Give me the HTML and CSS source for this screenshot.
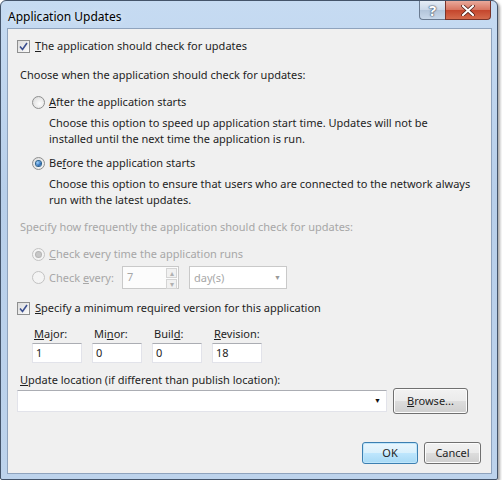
FILE: index.html
```html
<!DOCTYPE html>
<html lang="en">

<head>
    <meta charset="UTF-8" />
    <meta name="viewport" content="width=device-width, initial-scale=1.0" />
    <title>Application Updates</title>
    <link rel="stylesheet" href="styles.css">
</head>

<body>
    <div class="window">
        <div class="titlebar">
            <span class="title">Application Updates</span>
            <div class="caption-btns">
                <span class="cap-btn help">?</span>
                <span class="cap-btn close">
                    <svg width="14" height="11" viewBox="0 0 14 11">
                        <path d="M2 1 L12 10 M12 1 L2 10" stroke="#4a1a14" stroke-width="3.6" stroke-linecap="round" />
                        <path d="M2 1 L12 10 M12 1 L2 10" stroke="#fff" stroke-width="2.2" stroke-linecap="round" />
                    </svg>
                </span>
            </div>
        </div>

        <div class="client">
            <div class="check first">
                <span class="box"><svg width="9" height="9" viewBox="0 0 9 9"><path d="M1 4.5 L3.5 7.5 L8 1" fill="none" stroke="#3b4f8f" stroke-width="1.6" /></svg></span>
                <span><u>T</u>he application should check for updates</span>
            </div>

            <div class="label choose">Choose when the application should check for updates:</div>

            <div class="option after">
                <span class="radio"></span>
                <span><u>A</u>fter the application starts</span>
            </div>
            <div class="desc">Choose this option to speed up application start time. Updates will not be<br>installed until the next time the application is run.</div>

            <div class="option before">
                <span class="radio on"><span class="dot"></span></span>
                <span>Be<u>f</u>ore the application starts</span>
            </div>
            <div class="desc">Choose this option to ensure that users who are connected to the network always<br>run with the latest updates.</div>

            <div class="label disabled how">Specify how frequently the application should check for updates:</div>

            <div class="option disabled every-time">
                <span class="radio on"><span class="dot"></span></span>
                <span><u>C</u>heck every time the application runs</span>
            </div>
            <div class="option disabled every">
                <span class="radio"></span>
                <span class="every-label">Check <u>e</u>very:</span>
                <div class="spin">
                    <span class="spin-value">7</span>
                    <div class="spin-btns">
                        <span class="spin-btn">&#9652;</span>
                        <span class="spin-btn">&#9662;</span>
                    </div>
                </div>
                <div class="combo small">
                    <span class="combo-value">day(s)</span>
                    <span class="arrow">&#9660;</span>
                </div>
            </div>

            <div class="check version">
                <span class="box"><svg width="9" height="9" viewBox="0 0 9 9"><path d="M1 4.5 L3.5 7.5 L8 1" fill="none" stroke="#3b4f8f" stroke-width="1.6" /></svg></span>
                <span><u>S</u>pecify a minimum required version for this application</span>
            </div>

            <div class="versions">
                <div class="field">
                    <span class="field-label"><u>M</u>ajor:</span>
                    <span class="textbox">1</span>
                </div>
                <div class="field">
                    <span class="field-label">Mi<u>n</u>or:</span>
                    <span class="textbox">0</span>
                </div>
                <div class="field">
                    <span class="field-label">Buil<u>d</u>:</span>
                    <span class="textbox">0</span>
                </div>
                <div class="field">
                    <span class="field-label"><u>R</u>evision:</span>
                    <span class="textbox">18</span>
                </div>
            </div>

            <div class="label location"><u>U</u>pdate location (if different than publish location):</div>
            <div class="location-row">
                <div class="combo wide">
                    <span class="combo-value"></span>
                    <span class="arrow">&#9660;</span>
                </div>
                <span class="button browse"><u>B</u>rowse...</span>
            </div>

            <div class="footer">
                <span class="button default">OK</span>
                <span class="button">Cancel</span>
            </div>
        </div>
    </div>
</body>

</html>
```

FILE: styles.css
```css
body {
    margin: 0;
    background: #fff;
    font-family: "Noto Sans", "Open Sans", sans-serif;
    font-size: 11px;
    color: #1e1e1e;
}

u {
    text-decoration: underline;
    text-underline-offset: 1px;
}

.window {
    box-sizing: border-box;
    width: 498px;
    height: 480px;
    border: 1px solid #44546a;
    border-radius: 6px 6px 2px 2px;
    background: linear-gradient(#c6dbf2, #b8cfea 40%, #bdd3ec);
    box-shadow: 2px 2px 3px rgba(0, 0, 0, 0.35);
    padding: 0 5px 5px 6px;
    display: flex;
    flex-direction: column;
}

.titlebar {
    height: 27px;
    display: flex;
    justify-content: space-between;
    align-items: flex-start;
}

.title {
    font-size: 12px;
    color: #000;
    margin: 7px 0 0 1px;
    text-shadow: 0 0 6px rgba(255, 255, 255, 0.9);
}

.caption-btns {
    display: flex;
    margin-right: 1px;
}

.cap-btn {
    box-sizing: border-box;
    height: 19px;
    display: flex;
    align-items: center;
    justify-content: center;
    border: 1px solid #6a7b91;
    border-top: none;
}

.help {
    width: 26px;
    border-right: none;
    border-radius: 0 0 0 4px;
    background: linear-gradient(#e5edf6, #cad8e8 50%, #b3c5da 51%, #c8d8ea);
    color: #fff;
    font-size: 15px;
    font-weight: bold;
    text-shadow: 0 0 1px #44546a, 0 0 1px #44546a, 0 0 2px #44546a;
}

.close {
    width: 46px;
    border-color: #7a3429;
    border-radius: 0 0 4px 0;
    background: linear-gradient(#e9a99b, #d7745f 50%, #c4452c 51%, #d46a4c);
}

.client {
    box-sizing: border-box;
    flex: 1;
    border: 1px solid #8fa3bd;
    background: #f0f0f0;
    padding: 9px 10px 9px 9px;
    display: flex;
    flex-direction: column;
    line-height: 16px;
}

.check,
.option {
    display: flex;
    align-items: center;
    height: 16px;
}

.box {
    box-sizing: border-box;
    width: 13px;
    height: 13px;
    border: 1px solid #8e8f8f;
    background: linear-gradient(135deg, #dcdcdc, #fbfbfb);
    display: flex;
    align-items: center;
    justify-content: center;
    margin-right: 5px;
}

.radio {
    box-sizing: border-box;
    width: 13px;
    height: 13px;
    border: 1px solid #8e8f8f;
    border-radius: 50%;
    background: radial-gradient(circle at 60% 60%, #fdfdfd, #d6d6d6);
    display: flex;
    align-items: center;
    justify-content: center;
    margin: 0 4px 0 15px;
}

.dot {
    width: 5px;
    height: 5px;
    border-radius: 50%;
    background: radial-gradient(circle at 35% 35%, #9fd5ff, #1f5fae 70%);
    box-shadow: 0 0 0 1px #2c628b;
}

.label {
    margin-left: 3px;
}

.choose {
    margin-top: 13px;
}

.after {
    margin-top: 11px;
}

.desc {
    margin: 5px 0 0 32px;
    white-space: nowrap;
}

.before {
    margin-top: 8px;
}

.how {
    margin-top: 11px;
}

.disabled {
    color: #a7a7a7;
}

.disabled .radio {
    border-color: #c2c2c2;
    background: #f4f4f4;
}

.disabled .dot {
    background: #c7c7c7;
    box-shadow: 0 0 0 1px #b5b5b5;
}

.every-time {
    margin-top: 11px;
}

.every {
    margin-top: 4px;
    height: 23px;
}

.every-label {
    width: 73px;
}

.spin {
    box-sizing: border-box;
    width: 57px;
    height: 23px;
    border: 1px solid #c9c9c9;
    background: #fcfcfc;
    display: flex;
    justify-content: space-between;
}

.spin-value {
    padding: 2px 0 0 4px;
}

.spin-btns {
    width: 11px;
    display: flex;
    flex-direction: column;
    padding: 1px;
    gap: 1px;
}

.spin-btn {
    flex: 1;
    border: 1px solid #d4d4d4;
    background: #f1f1f1;
    font-size: 8px;
    line-height: 8px;
    text-align: center;
    color: #b0b0b0;
}

.combo {
    box-sizing: border-box;
    height: 23px;
    border: 1px solid #c9c9c9;
    background: #fff;
    display: flex;
    align-items: center;
    justify-content: space-between;
    padding: 0 5px 0 4px;
}

.combo.small {
    width: 98px;
    margin-left: 10px;
}

.arrow {
    font-size: 7px;
    color: #999;
}

.version {
    margin-top: 11px;
}

.versions {
    display: flex;
    gap: 10px;
    margin: 10px 0 0 15px;
}

.field {
    display: flex;
    flex-direction: column;
}

.field-label {
    margin-left: 2px;
    height: 17px;
}

.textbox {
    box-sizing: border-box;
    width: 50px;
    height: 20px;
    border: 1px solid #e2e3ea;
    border-top-color: #abadb3;
    background: #fff;
    padding: 1px 0 0 3px;
}

.location {
    margin-top: 9px;
}

.location-row {
    display: flex;
    align-items: center;
    margin-top: 0;
    height: 26px;
}

.combo.wide {
    width: 370px;
    height: 22px;
    border-color: #e2e3ea;
    border-top-color: #abadb3;
}

.combo.wide .arrow {
    color: #111;
}

.button {
    box-sizing: border-box;
    height: 22px;
    border: 1px solid #707070;
    border-radius: 3px;
    background: linear-gradient(#f2f2f2, #ebebeb 50%, #dddddd 51%, #cfcfcf);
    box-shadow: inset 0 0 0 1px #fcfcfc;
    display: flex;
    align-items: center;
    justify-content: center;
}

.browse {
    width: 75px;
    height: 26px;
    margin-left: 6px;
}

.footer {
    margin-top: auto;
    display: flex;
    justify-content: flex-end;
    gap: 6px;
}

.footer .button {
    width: 57px;
}

.button.default {
    width: 56px;
    border-color: #3c7fb1;
    box-shadow: inset 0 0 0 1px #bfe6fb;
    background: linear-gradient(#eaf6fd, #d9f0fc 50%, #bee6fd 51%, #a7d9f5);
}
```
